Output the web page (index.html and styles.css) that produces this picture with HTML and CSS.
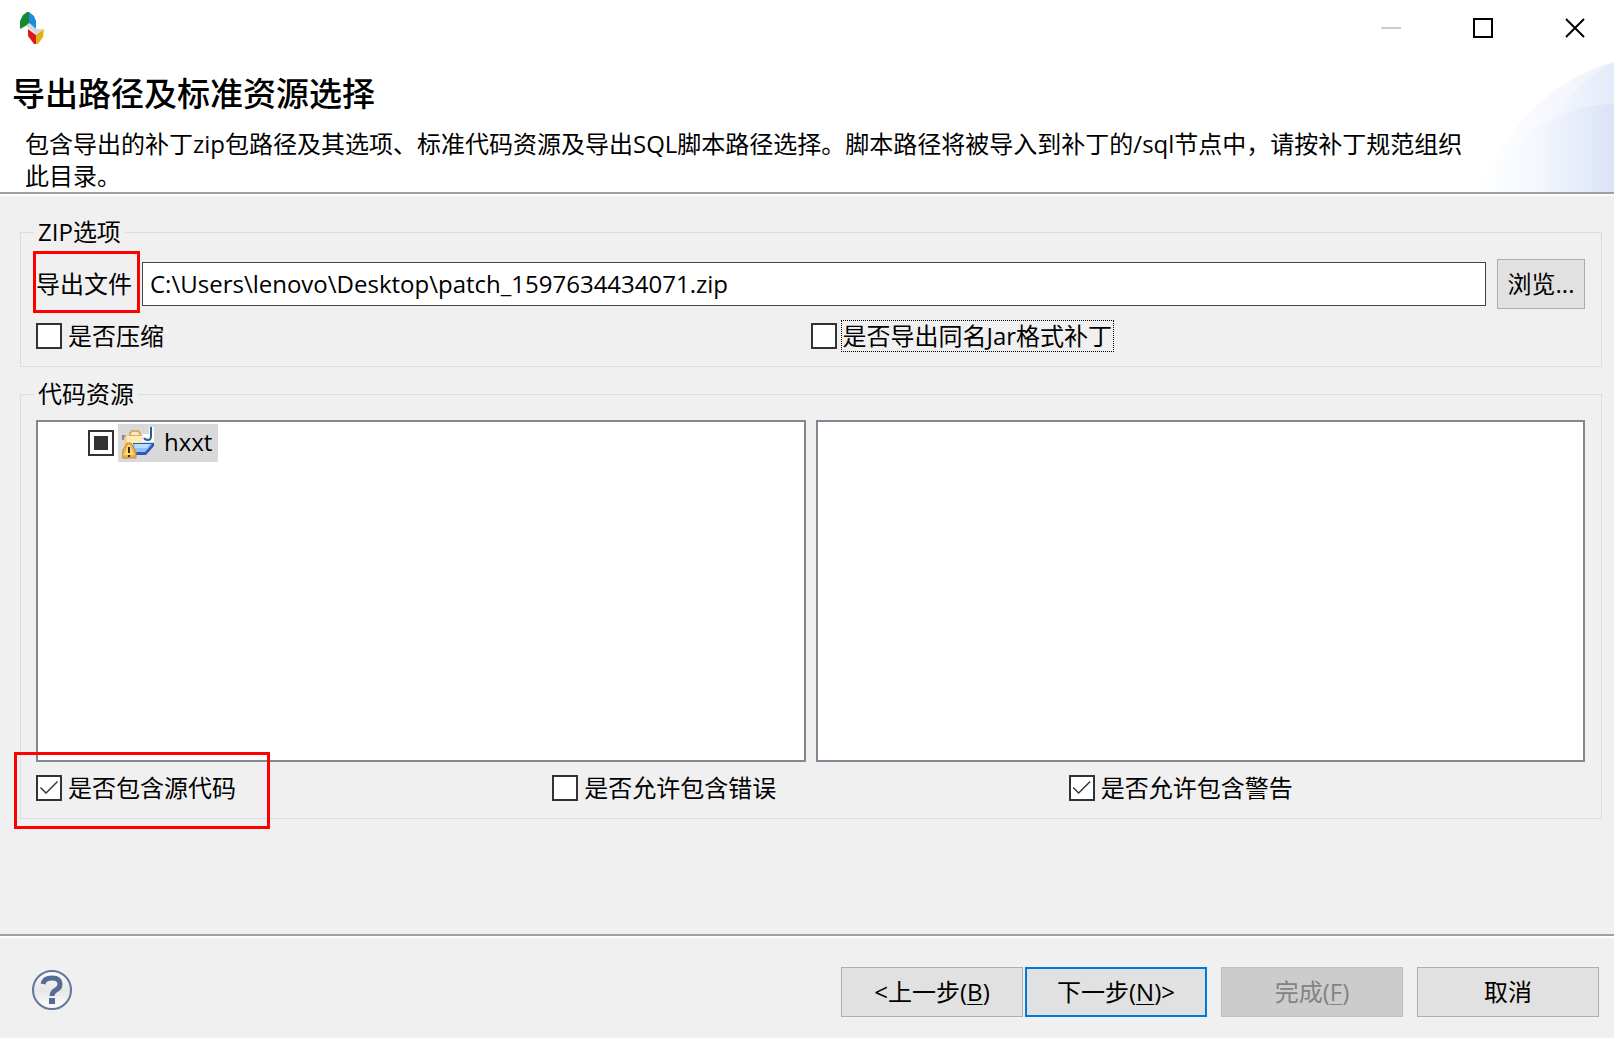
FILE: index.html
```html
<!DOCTYPE html>
<html lang="zh-CN">
<head>
<meta charset="utf-8">
<meta name="viewport" content="width=device-width, initial-scale=1">
<title>导出路径及标准资源选择</title>
<link rel="stylesheet" href="styles.css">
</head>
<body>
<form class="dialog">
  <div class="titlebar">
    <svg class="app-icon" width="24" height="32" viewBox="0 0 24 32" aria-hidden="true">
      <path d="M7 0 3 3 0 9v8l9-5V0z" fill="#148a2c"/>
      <path d="M9 0l5 4 2 5v8l-7-6z" fill="#1b8ce0"/>
      <path d="M6 14l3-3 7 6 7 0-6 6-8-7z" fill="#d4d8dc"/>
      <path d="M8 17l8 6v9h-2l-6-8z" fill="#dd1a1a"/>
      <path d="M24 17l-8 6v9h2l5-7z" fill="#dfb20c"/>
    </svg>
    <div class="window-controls">
      <button type="button" class="window-btn" aria-label="最小化" disabled>
        <svg width="20" height="20" viewBox="0 0 20 20"><path d="M0 10h20" stroke="#ccc" stroke-width="2"/></svg>
      </button>
      <button type="button" class="window-btn" aria-label="最大化">
        <svg width="20" height="20" viewBox="0 0 20 20"><path d="M1 1h18v18H1z" fill="none" stroke="#000" stroke-width="2"/></svg>
      </button>
      <button type="button" class="window-btn" aria-label="关闭">
        <svg width="20" height="20" viewBox="0 0 20 20"><path d="M1 1l18 18M19 1 1 19" stroke="#000" stroke-width="2"/></svg>
      </button>
    </div>
  </div>

  <header class="banner">
    <div class="banner-text">
      <h1 class="banner-title">导出路径及标准资源选择</h1>
      <p class="banner-desc">包含导出的补丁zip包路径及其选项、标准代码资源及导出SQL脚本路径选择。脚本路径将被导入到补丁的/sql节点中，请按补丁规范组织此目录。</p>
    </div>
    <svg class="banner-art" width="136" height="130" viewBox="0 0 136 130" aria-hidden="true">
      <defs>
        <linearGradient id="wash" x1="0" x2="136" y1="0" y2="0" gradientUnits="userSpaceOnUse">
          <stop offset="0" stop-color="#fff"/><stop offset="1" stop-color="#eef2fb"/>
        </linearGradient>
        <linearGradient id="mid" x1="60" x2="136" y1="0" y2="0" gradientUnits="userSpaceOnUse">
          <stop offset="0" stop-color="#f6f8fe"/><stop offset="1" stop-color="#e5ebf9"/>
        </linearGradient>
        <linearGradient id="deep" x1="0" x2="136" y1="0" y2="0" gradientUnits="userSpaceOnUse">
          <stop offset="0" stop-color="#fff"/><stop offset=".4" stop-color="#f5f8fe"/><stop offset="1" stop-color="#dbe3f6"/>
        </linearGradient>
      </defs>
      <path d="M0 130C20 78 68 18 136 0v130z" fill="url(#wash)"/>
      <path d="M66 74C84 42 108 12 136 0v74z" fill="url(#mid)"/>
      <path d="M0 130C28 90 66 44 136 42v88z" fill="url(#deep)"/>
    </svg>
  </header>

  <main class="content">
    <fieldset class="group">
      <legend class="group-title">ZIP选项</legend>
      <div class="file-row">
        <label class="file-label" for="export-file">导出文件<span class="mark mark-file"></span></label>
        <input class="file-input" id="export-file" type="text" value="C:\Users\lenovo\Desktop\patch_1597634434071.zip">
        <button type="button" class="btn btn-browse">浏览...</button>
      </div>
      <div class="checks checks-two">
        <div class="check"><input class="box" type="checkbox" id="compress"><label class="check-label" for="compress">是否压缩</label></div>
        <div class="check"><input class="box" type="checkbox" id="jar"><label class="check-label is-focused" for="jar">是否导出同名Jar格式补丁</label></div>
      </div>
    </fieldset>

    <fieldset class="group">
      <legend class="group-title">代码资源</legend>
      <div class="panes">
        <div class="pane">
          <div class="tree-item">
            <input class="box box-partial" type="checkbox" id="hxxt">
            <label class="tree-label" for="hxxt">
              <svg width="32" height="34" viewBox="0 0 32 34" aria-hidden="true">
                <path d="M0 9h6v5H0z" fill="#8b84a3"/>
                <path d="M2 12 4 9h16v12H2z" fill="#f5d48a"/>
                <path d="M8 10V7l2-2h6l2 2v3z" fill="#fbeabb" stroke="#d5ad68" stroke-width="2"/>
                <path d="M5 10h15v8H5z" fill="#fdecb4"/>
                <path d="M21 8h6V1h5v15H20z" fill="#fff"/>
                <path d="M29 1v9q0 4-3 4-3 0-4-2" fill="none" stroke="#1f5f96" stroke-width="2"/>
                <path d="M11 17h21v3l-8 9H12z" fill="#3157b8"/>
                <path d="M11 18h19l-7 8H12z" fill="#8fc3f7"/>
                <path d="M13 18h15l-3 4H13z" fill="#b5e0ff"/>
                <path d="M5 17h4l5 9v6H0v-6z" fill="#e9b04c" stroke="#c98732"/>
                <path d="M6 19h2l4 10H2z" fill="#f9d982"/>
                <path d="M7 21v6M7 29v2" stroke="#3b2508" stroke-width="2"/>
              </svg>
              <span class="tree-name">hxxt</span>
            </label>
          </div>
        </div>
        <div class="pane"></div>
      </div>
      <div class="checks checks-three">
        <div class="check"><input class="box" type="checkbox" id="source" checked><label class="check-label" for="source">是否包含源代码</label><span class="mark mark-source"></span></div>
        <div class="check"><input class="box" type="checkbox" id="errors"><label class="check-label" for="errors">是否允许包含错误</label></div>
        <div class="check"><input class="box" type="checkbox" id="warnings" checked><label class="check-label" for="warnings">是否允许包含警告</label></div>
      </div>
    </fieldset>
  </main>

  <footer class="footer">
    <button type="button" class="help" aria-label="帮助">
      <svg width="42" height="42" viewBox="0 0 42 42">
        <defs>
          <linearGradient id="disc" x1="0" x2="0" y1="0" y2="1">
            <stop offset="0" stop-color="#fff"/><stop offset=".5" stop-color="#e6e6e6"/><stop offset="1" stop-color="#fff"/>
          </linearGradient>
        </defs>
        <circle cx="21" cy="21" r="19" fill="url(#disc)" stroke="#63769a" stroke-width="2"/>
        <path d="M12 15Q13 9 21 9q8 0 8 6 0 4-4 6t-4 6" fill="none" stroke="#566c94" stroke-width="5"/>
        <path d="M18 29h6v6h-6z" fill="#566c94"/>
      </svg>
    </button>
    <div class="actions">
      <div class="step-actions">
        <button type="button" class="btn btn-wide">&lt;上一步(<u>B</u>)</button>
        <button type="button" class="btn btn-wide btn-default">下一步(<u>N</u>)&gt;</button>
      </div>
      <button type="button" class="btn btn-wide" disabled>完成(<u>F</u>)</button>
      <button type="button" class="btn btn-wide">取消</button>
    </div>
  </footer>
</form>
</body>
</html>
```
FILE: styles.css
```css
*, *::before, *::after { box-sizing: border-box; }

body {
  margin: 0;
  background: #f0f0f0;
  color: #000;
  font-family: "Open Sans", "Noto Sans CJK SC", sans-serif;
  font-size: 24px;
  line-height: 32px;
}

button, input {
  margin: 0;
  color: inherit;
  font: inherit;
}

.dialog {
  display: flex;
  flex-direction: column;
  min-height: 100vh;
}

/* Title bar */
.titlebar {
  display: flex;
  align-items: center;
  justify-content: space-between;
  height: 56px;
  padding-left: 20px;
  background: #fff;
}
.app-icon { display: block; }
.window-controls { display: flex; gap: 14px; }
.window-btn {
  display: flex;
  align-items: center;
  justify-content: center;
  width: 78px;
  height: 56px;
  padding: 0;
  border: 0;
  background: none;
}

/* Banner */
.banner {
  display: flex;
  align-items: flex-end;
  background: #fff;
  border-bottom: 2px solid #a0a0a0;
  box-shadow: 0 2px 0 #fff;
}
.banner-text { flex: 1; padding: 16px 0 0 12px; }
.banner-title {
  margin: 0;
  font-size: 33px;
  line-height: 44px;
  font-weight: 500;
}
.banner-desc { margin: 12px 0 0; padding-left: 13px; }
.banner-art { display: block; flex: none; }

/* Groups */
.content {
  display: flex;
  flex: 1;
  flex-direction: column;
  gap: 11px;
  padding: 22px 12px 22px 20px;
}
.group {
  min-width: 0;
  margin: 0;
  padding: 10px 16px 14px 15px;
  border: 1px solid #dcdcdc;
}
.group-title { margin-left: -2px; padding: 0 4px; }

.file-row {
  display: flex;
  align-items: center;
  height: 52px;
}
.file-label { position: relative; flex: none; width: 106px; }
.file-input {
  flex: 1;
  min-width: 0;
  height: 44px;
  padding: 0 7px 2px;
  border: 1px solid #444;
  background: #fff;
  outline: 0;
}

/* Check boxes */
.checks { display: grid; margin-top: 10px; }
.checks-two { grid-template-columns: repeat(2, 1fr); }
.checks-three { grid-template-columns: repeat(3, 1fr); }
.check {
  position: relative;
  display: flex;
  align-items: center;
  gap: 4px;
}
.box {
  flex: none;
  width: 26px;
  height: 26px;
  appearance: none;
  border: 2px solid #333;
  background: #fff;
}
.box:checked::before {
  content: "";
  display: block;
  width: 22px;
  height: 22px;
  background: #333;
  clip-path: polygon(2px 11px, 3px 10px, 8px 15px, 19px 4px, 20px 5px, 8px 17px);
}
.box-partial::before {
  content: "";
  display: block;
  width: 14px;
  height: 14px;
  margin: 4px;
  background: #333;
}
.check-label { padding: 0 2px; }
.is-focused { outline: 1px dotted #000; outline-offset: -1px; }

/* Resource panes */
.panes {
  display: grid;
  grid-template-columns: repeat(2, 1fr);
  gap: 10px;
}
.pane {
  height: 342px;
  padding: 2px 2px 2px 50px;
  border: 2px solid #828790;
  background: #fff;
}
.tree-item { display: flex; align-items: center; gap: 4px; }
.tree-label {
  display: flex;
  align-items: center;
  gap: 10px;
  height: 38px;
  padding: 0 6px 0 4px;
  background: #d9d9d9;
}
.tree-name { padding-bottom: 2px; }

/* Red annotation frames */
.mark {
  position: absolute;
  border: 3px solid #f00;
  pointer-events: none;
}
.mark-file { inset: -17px 2px -13px -3px; }
.mark-source { top: -20px; left: -22px; width: 256px; height: 77px; }

/* Buttons */
.btn {
  height: 50px;
  padding: 0;
  border: 1px solid #adadad;
  background: #e1e1e1;
}
.btn:disabled {
  border-color: #bfbfbf;
  background: #ccc;
  color: #838383;
}
.btn-browse { flex: none; width: 88px; margin-left: 11px; }
.btn-wide { width: 182px; }
.btn-default { border: 2px solid #0078d7; }
.btn u { text-underline-offset: 3px; text-decoration-thickness: 1px; }

/* Footer */
.footer {
  display: flex;
  align-items: flex-start;
  justify-content: space-between;
  padding: 31px 15px 21px 31px;
  border-top: 2px solid #a0a0a0;
  box-shadow: inset 0 2px 0 #fff;
}
.help {
  display: flex;
  margin-top: 2px;
  padding: 0;
  border: 0;
  background: none;
}
.actions { display: flex; gap: 14px; }
.step-actions { display: flex; gap: 2px; }
```
